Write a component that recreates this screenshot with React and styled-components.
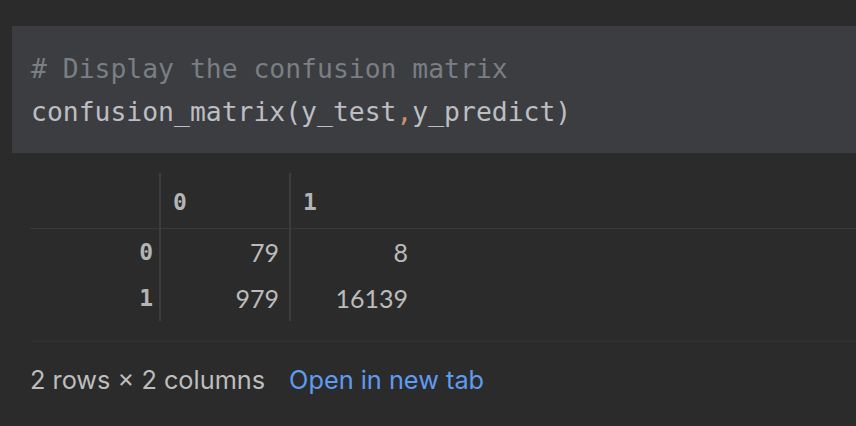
import React from 'react'
import { styled, createGlobalStyle } from 'styled-components'

const GlobalStyle = createGlobalStyle`
    html, body {
        margin: 0;
        padding: 0;
        background: #2b2b2b;
        height: 100%;
        overflow: hidden;
    }
`

const matrix = {
    columns: ['0', '1'],
    rows: [
        { index: '0', values: [79, 8] },
        { index: '1', values: [979, 16139] },
    ],
}

const App = () => {
    return (
        <Page>
            <GlobalStyle />
            <CodeCell>
                <CodeLine $comment># Display the confusion matrix</CodeLine>
                <CodeLine>
                    confusion_matrix(y_test<Comma>,</Comma>y_predict)
                </CodeLine>
            </CodeCell>

            <Output>
                <Table>
                    <HeadCell $divider />
                    {matrix.columns.map((col, i) => (
                        <HeadCell key={col} $divider={i === 0}>{col}</HeadCell>
                    ))}
                    <Filler $head />
                    {matrix.rows.map((row) => (
                        <React.Fragment key={row.index}>
                            <IndexCell>{row.index}</IndexCell>
                            {row.values.map((v, i) => (
                                <ValueCell key={i} $first={i === 0}>{v}</ValueCell>
                            ))}
                            <Filler />
                        </React.Fragment>
                    ))}
                </Table>

                <Footer>
                    <Summary>2 rows × 2 columns</Summary>
                    <Link>Open in new tab</Link>
                </Footer>
            </Output>
        </Page>
    )
}

const Page = styled.div`
    padding: 26px 0 0 12px;
`

const CodeCell = styled.div`
    background-color: #3c3d40;
    padding: 21px 19px 20px;
    font-family: 'DejaVu Sans Mono', 'Liberation Mono', monospace;
    font-size: 26.4px;
    line-height: 43px;
    white-space: pre;
`

const CodeLine = styled.div`
    color: ${(p) => (p.$comment ? '#7a7e85' : '#bcbec4')};
`

const Comma = styled.span`
    color: #cf8e6d;
`

const Output = styled.div`
    margin: 20px 0 0 18px;
`

const Table = styled.div`
    display: grid;
    grid-template-columns: 131px 130px 129px 1fr;
    grid-template-rows: 56px;
    grid-auto-rows: 46px;
`

const HeadCell = styled.div`
    display: flex;
    align-items: center;
    padding: 2px 12px 0;
    border-bottom: 1px solid #393939;
    border-right: ${(p) => (p.$divider ? '2px solid #3d3d3d' : 'none')};
    font-family: 'DejaVu Sans Mono', monospace;
    font-weight: bold;
    font-size: 23px;
    color: #b4b4b4;
`

const IndexCell = styled.div`
    display: flex;
    align-items: center;
    justify-content: flex-end;
    padding: 0 6px;
    border-right: 2px solid #3d3d3d;
    font-family: 'DejaVu Sans Mono', monospace;
    font-weight: bold;
    font-size: 23px;
    color: #b4b4b4;
`

const ValueCell = styled.div`
    display: flex;
    align-items: center;
    justify-content: flex-end;
    padding: 0 ${(p) => (p.$first ? '10px' : '12px')};
    border-right: ${(p) => (p.$first ? '2px solid #3d3d3d' : 'none')};
    font-family: Lato, sans-serif;
    font-size: 25px;
    color: #bbbbbb;
`

const Filler = styled.div`
    border-bottom: ${(p) => (p.$head ? '1px solid #393939' : 'none')};
`

const Footer = styled.div`
    margin-top: 20px;
    border-top: 1px solid #323232;
    padding-top: 23px;
    display: flex;
    gap: 24px;
    align-items: center;
    font-family: Inter, sans-serif;
    font-size: 25.3px;
    line-height: 30px;
`

const Summary = styled.span`
    color: #bdbdbd;
`

const Link = styled.span`
    color: #5f9bf0;
    cursor: pointer;
`

export default App
